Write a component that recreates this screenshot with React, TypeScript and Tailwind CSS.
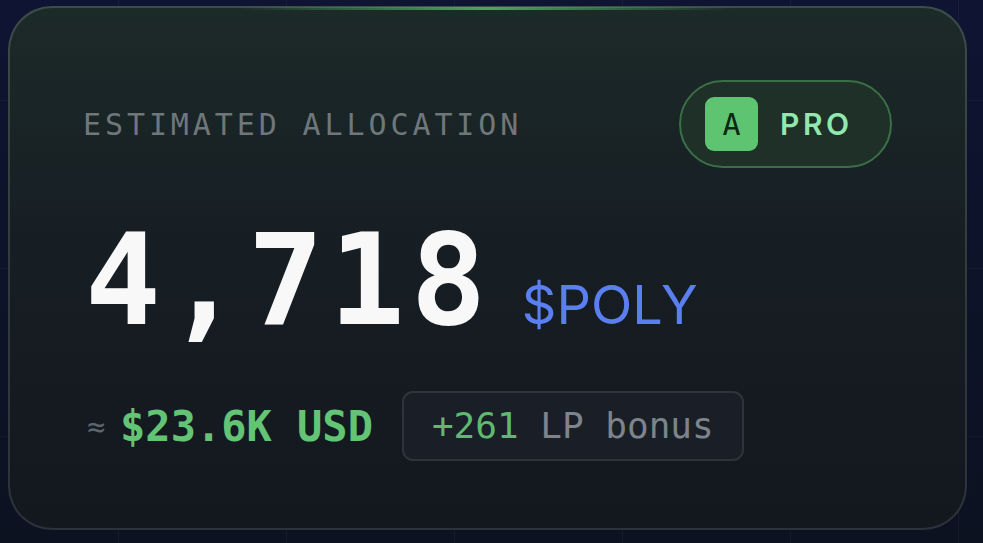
const mono = "font-['DejaVu_Sans_Mono','Liberation_Mono',monospace]";
const sans = "font-['Inter','Liberation_Sans',sans-serif]";

const ProBadge = () => (
	<div className="flex h-[88px] w-[213px] items-center gap-[22px] rounded-full border-2 border-[#3b7047] bg-[#1e3027] pl-[24px]">
		<div
			className={`flex h-[54px] w-[53px] items-center justify-center rounded-[9px] bg-[#5fc472] text-[30px] text-[#0b2912] ${mono}`}
		>
			A
		</div>
		<span className={`text-[30px] font-semibold tracking-[0.12em] text-[#90e8ae] ${sans}`}>PRO</span>
	</div>
);

export default function App() {
	return (
		<div className="h-[543px] w-full overflow-hidden bg-[#0d1328] bg-[linear-gradient(to_right,rgba(255,255,255,0.035)_1px,transparent_1px),linear-gradient(to_bottom,rgba(255,255,255,0.03)_1px,transparent_1px),linear-gradient(to_bottom,#0e1432,#0c1220)] bg-[size:168px_168px,168px_168px,100%_100%] bg-[position:118px_100px,118px_100px,0_0] pl-[8px] pt-[6px]">
			<div className="relative h-[524px] w-[959px] rounded-[44px] bg-gradient-to-b from-[#3c4c46] via-[#323b3d] to-[#2c323b] p-[2px]">
				<div className="absolute left-[24%] right-[24%] top-[1px] h-[3px] rounded-full bg-gradient-to-r from-transparent via-[#4aa564] to-transparent" />
				<div className="flex h-full flex-col rounded-[42px] bg-gradient-to-b from-[#1c2a28] via-[#161d23] to-[#13181f] pl-[73px] pr-[73px] pt-[72px]">
					<div className="flex items-center justify-between">
						<span className={`text-[30px] tracking-[0.13em] text-[#6f777b] ${mono}`}>ESTIMATED ALLOCATION</span>
						<ProBadge />
					</div>

					<div className="mt-[50px] flex items-baseline">
						<span className={`ml-[2px] text-[126px] font-bold leading-none tracking-[5.5px] text-[#f8f8f8] ${mono}`}>
							4,718
						</span>
						<span className={`ml-[30px] text-[54px] text-[#5b7ff0] ${sans}`}>$POLY</span>
					</div>

					<div className="mt-[46px] flex items-center">
						<span className={`ml-[4px] text-[30px] text-[#5e656c] ${mono}`}>≈</span>
						<span className={`ml-[15px] text-[42px] font-bold text-[#62c474] ${mono}`}>$23.6K USD</span>
						<div
							className={`ml-[29px] flex h-[70px] items-center rounded-[11px] border-2 border-[#2e343c] bg-[#1a1f27] px-[28px] text-[36px] ${mono}`}
						>
							<span className="text-[#5fba70]">+261</span>
							<span className="ml-[21.7px] text-[#7d848b]">LP bonus</span>
						</div>
					</div>
				</div>
			</div>
		</div>
	);
}
